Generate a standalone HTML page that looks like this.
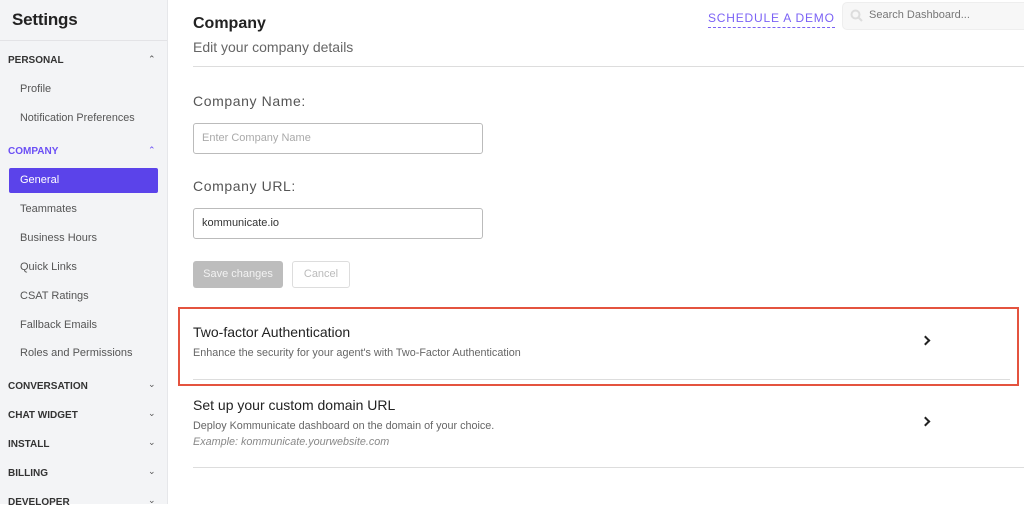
<!DOCTYPE html>
<html><head><meta charset="utf-8"><style>
*{box-sizing:border-box;margin:0;padding:0}
body{width:1024px;height:504px;overflow:hidden;font-family:"Liberation Sans",Arial,sans-serif;background:#fff;position:relative}
.a{position:absolute;white-space:nowrap}
#sb{position:absolute;left:0;top:0;width:168px;height:504px;background:#f3f4f6;border-right:1px solid #e6e7ea}
.h{font-size:10px;font-weight:bold;color:#333;left:8px}
.i{font-size:11px;color:#555;left:20px}
.c{left:148px;font-size:9px;color:#555}
.lbl{font-size:14px;color:#555;letter-spacing:.6px;left:193px}
.inp{position:absolute;left:193px;width:290px;height:31px;border:1px solid #bbb;border-radius:3px;font-size:11px;padding:0 8px;line-height:29px}
.chev{position:absolute;width:7px;height:7px;border-right:2px solid #222;border-top:2px solid #222;transform:rotate(45deg)}
</style></head><body>
<div id="sb">
<div class="a" style="left:12px;top:10px;font-size:17px;color:#222;font-weight:bold;letter-spacing:-.2px">Settings</div>
<div style="position:absolute;left:0;top:40px;width:167px;border-top:1px solid #e3e3e6"></div>
<div class="a h" style="top:55px">PERSONAL</div><div class="a c" style="top:54px">&#8963;</div>
<div class="a i" style="top:83px">Profile</div>
<div class="a i" style="top:112px;font-size:10.8px">Notification Preferences</div>
<div class="a h" style="top:146px;color:#6b4ff5">COMPANY</div><div class="a c" style="top:145px;color:#6b4ff5">&#8963;</div>
<div style="position:absolute;left:9px;top:168px;width:149px;height:25px;background:#5b43ea;border-radius:2px"></div>
<div class="a i" style="top:174px;color:#fff">General</div>
<div class="a i" style="top:203px">Teammates</div>
<div class="a i" style="top:232px">Business Hours</div>
<div class="a i" style="top:261px">Quick Links</div>
<div class="a i" style="top:290px">CSAT Ratings</div>
<div class="a i" style="top:319px">Fallback Emails</div>
<div class="a i" style="top:347px">Roles and Permissions</div>
<div class="a h" style="top:381px">CONVERSATION</div><div class="a c" style="top:379px">&#8964;</div>
<div class="a h" style="top:410px">CHAT WIDGET</div><div class="a c" style="top:408px">&#8964;</div>
<div class="a h" style="top:439px">INSTALL</div><div class="a c" style="top:437px">&#8964;</div>
<div class="a h" style="top:468px">BILLING</div><div class="a c" style="top:466px">&#8964;</div>
<div class="a h" style="top:497px">DEVELOPER</div><div class="a c" style="top:495px">&#8964;</div>
</div>
<div class="a" style="left:193px;top:15px;font-size:16px;font-weight:bold;color:#222">Company</div>
<div class="a" style="left:193px;top:39px;font-size:14px;color:#666">Edit your company details</div>
<div class="a" style="left:708px;top:11px;font-size:12px;color:#7b62f5;letter-spacing:.8px;border-bottom:1px dashed #7b62f5;padding-bottom:2px">SCHEDULE A DEMO</div>
<div style="position:absolute;left:842px;top:2px;width:190px;height:28px;background:#f7f7f7;border:1px solid #eee;border-radius:5px"></div>
<svg class="a" style="left:850px;top:9px" width="13" height="13"><circle cx="5.5" cy="5.5" r="4" fill="none" stroke="#ddd" stroke-width="2"/><path d="M8.5 8.5L12 12" stroke="#ddd" stroke-width="2"/></svg>
<div class="a" style="left:869px;top:9px;font-size:11px;color:#777">Search Dashboard...</div>
<div style="position:absolute;left:193px;top:66px;width:831px;border-top:1px solid #ddd"></div>
<div class="a lbl" style="top:93px">Company Name:</div>
<div class="inp" style="top:123px;color:#aaa">Enter Company Name</div>
<div class="a lbl" style="top:178px">Company URL:</div>
<div class="inp" style="top:208px;color:#333">kommunicate.io</div>
<div style="position:absolute;left:193px;top:261px;width:90px;height:27px;background:#bdbdbd;border-radius:3px;color:#f2f2f2;font-size:11px;text-align:center;line-height:27px">Save changes</div>
<div style="position:absolute;left:292px;top:261px;width:58px;height:27px;border:1px solid #ddd;border-radius:3px;color:#bbb;font-size:11px;text-align:center;line-height:25px">Cancel</div>
<div style="position:absolute;left:178px;top:307px;width:841px;height:79px;border:2px solid #e4533f"></div>
<div class="a" style="left:193px;top:324px;font-size:14px;color:#222">Two-factor Authentication</div>
<div class="a" style="left:193px;top:347px;font-size:10.8px;color:#666">Enhance the security for your agent's with Two-Factor Authentication</div>
<div class="chev" style="left:922px;top:337px"></div>
<div style="position:absolute;left:193px;top:379px;width:817px;border-top:1px solid #ddd"></div>
<div class="a" style="left:193px;top:397px;font-size:14px;color:#222">Set up your custom domain URL</div>
<div class="a" style="left:193px;top:420px;font-size:10.8px;color:#666">Deploy Kommunicate dashboard on the domain of your choice.</div>
<div class="a" style="left:193px;top:436px;font-size:10.8px;color:#888;font-style:italic">Example: kommunicate.yourwebsite.com</div>
<div class="chev" style="left:922px;top:418px"></div>
<div style="position:absolute;left:193px;top:467px;width:831px;border-top:1px solid #ddd"></div>
</body></html>
